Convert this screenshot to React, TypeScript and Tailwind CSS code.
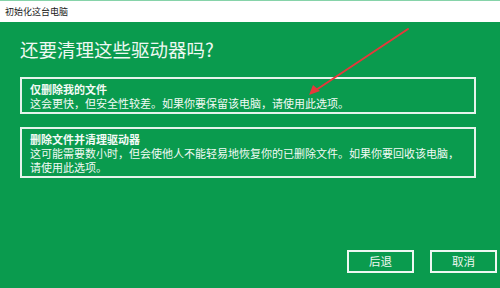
const font = { fontFamily: '"Noto Sans CJK SC", "Noto Sans", sans-serif' }

interface Option {
  title: string
  lines: string[]
}

const options: Option[] = [
  {
    title: "仅删除我的文件",
    lines: ["这会更快，但安全性较差。如果你要保留该电脑，请使用此选项。"],
  },
  {
    title: "删除文件并清理驱动器",
    lines: [
      "这可能需要数小时，但会使他人不能轻易地恢复你的已删除文件。如果你要回收该电脑，",
      "请使用此选项。",
    ],
  },
]

export default function App() {
  return (
    <div
      className="relative flex flex-col w-[500px] h-[288px] overflow-hidden bg-[#0a9b4e]"
      style={font}
    >
      <div className="h-px bg-[#86d3a9]" />
      <div className="h-[21px] bg-white px-[5px] text-[9px] leading-[21px] text-[#1a1a1a]">
        初始化这台电脑
      </div>

      <div className="flex flex-col flex-1 px-[20px] pt-[14px] pb-[15px]">
        <h1 className="text-[18.5px] leading-[26px] text-[#eef8f2] font-normal">
          还要清理这些驱动器吗?
        </h1>

        <div className="flex flex-col gap-[13px] mt-[15px] w-[456px]">
          {options.map(opt => (
            <div
              key={opt.title}
              className="border-2 border-[#e6f4ec] pl-[8px] pt-[3px] pb-[2px] text-[11px] leading-[14px] text-[#f2faf5] whitespace-nowrap"
            >
              <div className="font-bold">{opt.title}</div>
              {opt.lines.map(line => (
                <div key={line}>{line}</div>
              ))}
            </div>
          ))}
        </div>

        <div className="mt-auto flex justify-end gap-[16px] -mr-[17px]">
          {["后退", "取消"].map(label => (
            <button
              key={label}
              className="w-[67px] h-[23px] border-2 border-[#eef8f2] text-[11.5px] leading-[19px] text-[#eef8f2]"
            >
              {label}
            </button>
          ))}
        </div>
      </div>

      {/* red annotation arrow */}
      <svg className="absolute left-0 top-0 pointer-events-none" width="500" height="288">
        <line x1="408" y1="29" x2="316" y2="90" stroke="#e5383b" strokeWidth="2" strokeLinecap="round" />
        <polygon points="309,95 313,85 320,91" fill="#e5383b" />
      </svg>
    </div>
  )
}
